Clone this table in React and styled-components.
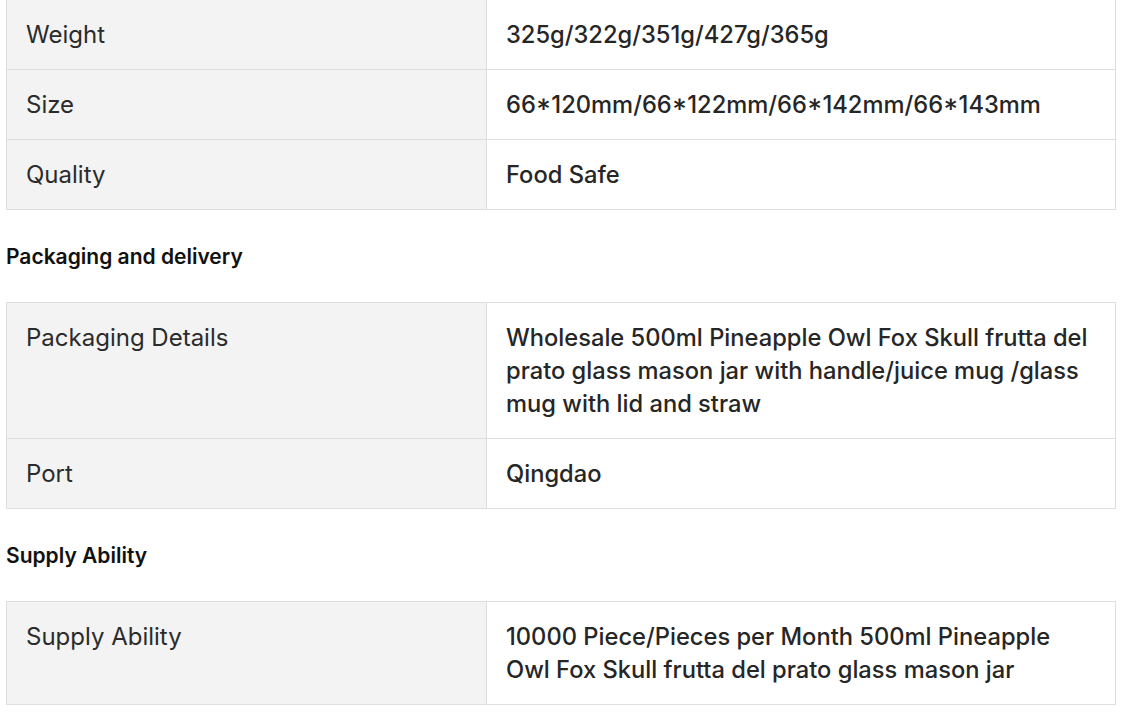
import styled, { createGlobalStyle } from 'styled-components';

const GlobalStyle = createGlobalStyle`
  html, body {
    margin: 0;
    padding: 0;
    background: #ffffff;
  }
  body {
    font-family: Inter, "Noto Sans", sans-serif;
    color: #222;
  }
`;

const Page = styled.div`
  padding: 0 13px 0 6px;
  margin-top: -1px;
`;

const Table = styled.table`
  width: 100%;
  border-collapse: collapse;
  table-layout: fixed;
`;

const Row = styled.tr``;

const Label = styled.td`
  width: 480px;
  box-sizing: border-box;
  background: #f3f3f3;
  border: 1px solid #dedede;
  padding: 18px 19px;
  font-size: 24px;
  line-height: 33px;
  font-weight: 400;
  color: #2b2b2b;
  vertical-align: top;
`;

const Value = styled.td`
  background: #ffffff;
  border: 1px solid #dedede;
  padding: 18px 19px;
  font-size: 23.7px;
  line-height: 33px;
  font-weight: 500;
  color: #262626;
  vertical-align: top;
`;

const Heading = styled.h3`
  margin: 0;
  padding: 33px 0 32px;
  font-size: 21px;
  line-height: 27px;
  font-weight: 600;
  color: #111;
`;

const sections = [
  {
    title: null,
    rows: [
      ['Weight', '325g/322g/351g/427g/365g'],
      ['Size', '66*120mm/66*122mm/66*142mm/66*143mm'],
      ['Quality', 'Food Safe'],
    ],
  },
  {
    title: 'Packaging and delivery',
    rows: [
      [
        'Packaging Details',
        'Wholesale 500ml Pineapple Owl Fox Skull frutta del prato glass mason jar with handle/juice mug /glass mug with lid and straw',
      ],
      ['Port', 'Qingdao'],
    ],
  },
  {
    title: 'Supply Ability',
    rows: [
      [
        'Supply Ability',
        '10000 Piece/Pieces per Month 500ml Pineapple Owl Fox Skull frutta del prato glass mason jar',
      ],
    ],
  },
];

export default function App() {
  return (
    <>
      <GlobalStyle />
      <Page>
        {sections.map((s, i) => (
          <div key={i}>
            {s.title && <Heading>{s.title}</Heading>}
            <Table>
              <tbody>
                {s.rows.map(([k, v]) => (
                  <Row key={k}>
                    <Label>{k}</Label>
                    <Value>{v}</Value>
                  </Row>
                ))}
              </tbody>
            </Table>
          </div>
        ))}
      </Page>
    </>
  );
}
